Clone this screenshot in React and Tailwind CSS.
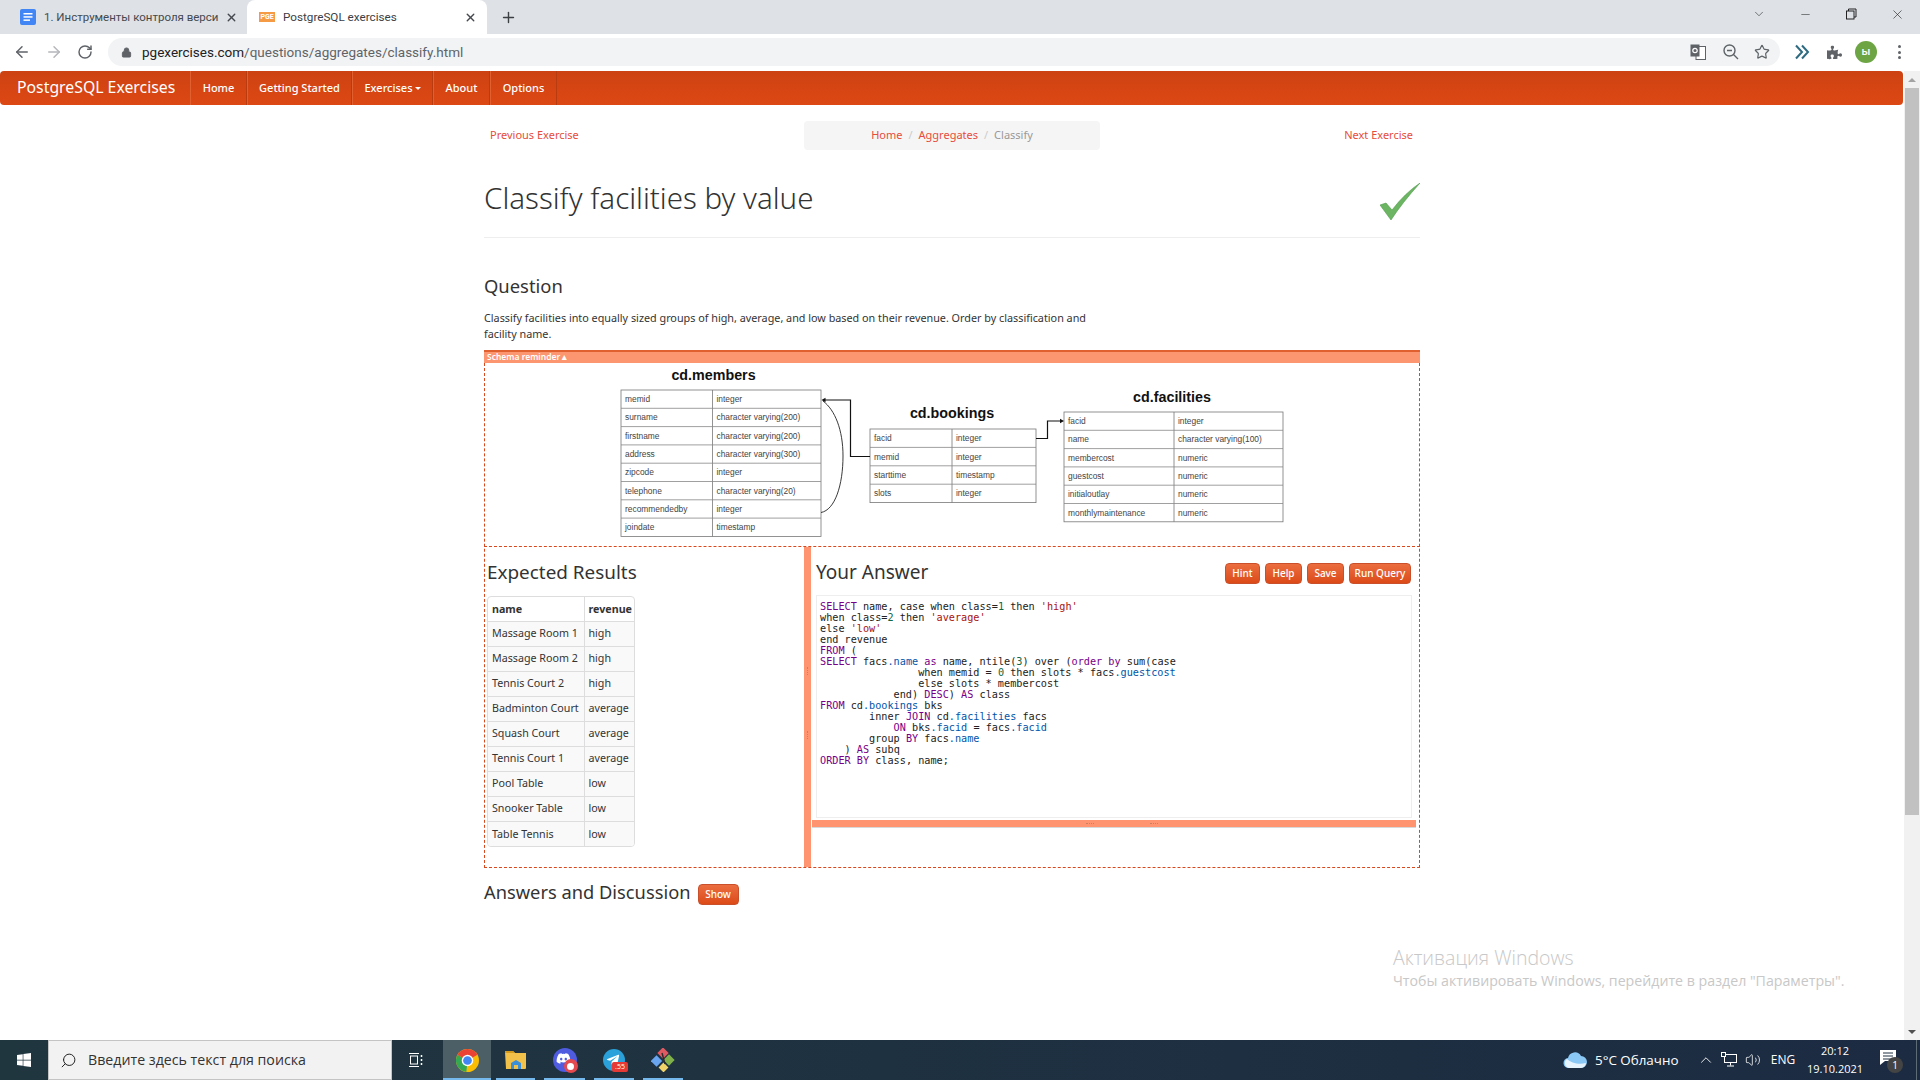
import React from 'react';
import { ArrowLeft, ArrowRight, RotateCw, Lock, Plus, X, Star, Minus, Search, Volume2, ChevronUp, ChevronDown } from 'lucide-react';
import { FaWindows, FaDiscord, FaTelegramPlane, FaPuzzlePiece } from 'react-icons/fa';

const K = 'text-[#770088]';
const S = 'text-[#aa1111]';
const P = 'text-[#0055aa]';
const N = 'text-[#116644]';

// one entry per line of the query, plain strings stay black
const CODE = [
  [['SELECT', K], ' name, case when class=', ['1', N], ' then ', ["'high'", S]],
  ['when class=', ['2', N], ' then ', ["'average'", S]],
  ['else ', ["'low'", S]],
  ['end revenue'],
  [['FROM', K], ' ('],
  [['SELECT', K], ' facs', ['.name', P], ' ', ['as', K], ' name, ntile(', ['3', N], ') over (', ['order by', K], ' sum(case'],
  ['                when memid = ', ['0', N], ' then slots * facs', ['.guestcost', P]],
  ['                else slots * membercost'],
  ['            end) ', ['DESC', K], ') ', ['AS', K], ' class'],
  [['FROM', K], ' cd', ['.bookings', P], ' bks'],
  ['        inner ', ['JOIN', K], ' cd', ['.facilities', P], ' facs'],
  ['            ', ['ON', K], ' bks', ['.facid', P], ' = facs', ['.facid', P]],
  ['        group ', ['BY', K], ' facs', ['.name', P]],
  ['    ) ', ['AS', K], ' subq'],
  [['ORDER BY', K], ' class, name;'],
];

const RESULTS = [
  ['Massage Room 1', 'high'],
  ['Massage Room 2', 'high'],
  ['Tennis Court 2', 'high'],
  ['Badminton Court', 'average'],
  ['Squash Court', 'average'],
  ['Tennis Court 1', 'average'],
  ['Pool Table', 'low'],
  ['Snooker Table', 'low'],
  ['Table Tennis', 'low'],
];

const MEMBERS = [
  ['memid', 'integer'],
  ['surname', 'character varying(200)'],
  ['firstname', 'character varying(200)'],
  ['address', 'character varying(300)'],
  ['zipcode', 'integer'],
  ['telephone', 'character varying(20)'],
  ['recommendedby', 'integer'],
  ['joindate', 'timestamp'],
];
const BOOKINGS = [
  ['facid', 'integer'],
  ['memid', 'integer'],
  ['starttime', 'timestamp'],
  ['slots', 'integer'],
];
const FACILITIES = [
  ['facid', 'integer'],
  ['name', 'character varying(100)'],
  ['membercost', 'numeric'],
  ['guestcost', 'numeric'],
  ['initialoutlay', 'numeric'],
  ['monthlymaintenance', 'numeric'],
];

function SchemaTable({ x, y, w, split, rowH, rows, title, titleX, titleY }) {
  const h = rowH * rows.length;
  return (
    <g>
      <text x={titleX} y={titleY} textAnchor="middle" fontSize="14.3" fontWeight="700" fill="#111">{title}</text>
      <rect x={x} y={y} width={w} height={h} fill="#fff" stroke="#777" strokeWidth="0.8" />
      <line x1={x + split} x2={x + split} y1={y} y2={y + h} stroke="#777" strokeWidth="0.8" />
      {rows.map(([a, b], i) => (
        <g key={a}>
          {i > 0 && <line x1={x} x2={x + w} y1={y + i * rowH} y2={y + i * rowH} stroke="#888" strokeWidth="0.8" />}
          <text x={x + 4} y={y + i * rowH + 12.1} fontSize="8.4" fill="#444">{a}</text>
          <text x={x + split + 4} y={y + i * rowH + 12.1} fontSize="8.4" fill="#444">{b}</text>
        </g>
      ))}
    </g>
  );
}

function SchemaDiagram() {
  return (
    <svg viewBox="484 363 936 184" className="block w-full h-[184px] font-['Liberation_Sans',sans-serif]">
      <SchemaTable x={621} y={390} w={200} split={91.5} rowH={18.3} rows={MEMBERS} title="cd.members" titleX={713.5} titleY={380} />
      <SchemaTable x={870} y={429} w={166} split={82} rowH={18.4} rows={BOOKINGS} title="cd.bookings" titleX={952} titleY={418} />
      <SchemaTable x={1064} y={412} w={219} split={110} rowH={18.3} rows={FACILITIES} title="cd.facilities" titleX={1172} titleY={402} />
      <path d="M870 456.5H850.5V400H824" fill="none" stroke="#111" strokeWidth="1.2" />
      <path d="M821.5 400l4-2.2v4.4z" fill="#111" />
      <path d="M1036 438.5H1047.5V421H1060" fill="none" stroke="#111" strokeWidth="1.2" />
      <path d="M1064 421l-4-2.2v4.4z" fill="#111" />
      <path d="M821 512.5C835 510 843 485 843 456C843 430 835 410 823 401" fill="none" stroke="#222" strokeWidth="0.9" />
    </svg>
  );
}

function Btn({ className, children }) {
  return (
    <button className={`h-[21px] rounded-[4px] border border-[#c9502a] bg-linear-to-b from-[#eb6d3f] to-[#dc4a16] text-[10px] font-medium text-white ${className}`}>
      {children}
    </button>
  );
}

function NavItem({ w, children }) {
  return (
    <div className={`h-full flex items-center justify-center border-r border-r-[#b93c10] border-l border-l-[#e0602f] text-[11px] font-medium text-white ${w}`}>
      {children}
    </div>
  );
}

function ChromeLogo() {
  return (
    <svg width="23" height="23" viewBox="4 4 40 40">
      <circle cx="24" cy="24" r="20" fill="#fbbc04" />
      <path d="M24 24L6.68 14A20 20 0 0 0 22 44Z" fill="#34a853" />
      <path d="M24 24L6.68 14A20 20 0 0 1 41.32 14Z" fill="#ea4335" />
      <circle cx="24" cy="24" r="10" fill="#fff" />
      <circle cx="24" cy="24" r="7.6" fill="#4285f4" />
    </svg>
  );
}

function TaskIcon({ w, active, children }) {
  return (
    <div className={`h-full pt-[2px] flex items-center justify-center border-b-[2px] border-b-[#76b9ed] ${active ? 'bg-[#4c5f67]' : ''} ${w}`}>
      {children}
    </div>
  );
}

export default function App() {
  return (
    <div className="w-[1920px] h-[1080px] flex flex-col overflow-hidden bg-white font-['Noto_Sans',sans-serif] text-[#333]">
      {/* tab strip */}
      <div className="h-[34px] shrink-0 bg-[#dee1e6] flex font-['Roboto',sans-serif] text-[12px] text-[#45494e]">
        <div className="w-[247px] flex items-center pl-[20px]">
          <svg width="16" height="16" viewBox="0 0 16 16" className="shrink-0">
            <rect width="16" height="16" y="0" rx="2" fill="#4285f4" />
            <rect x="3.5" y="4" width="9" height="1.5" fill="#fff" />
            <rect x="3.5" y="7.2" width="9" height="1.5" fill="#fff" />
            <rect x="3.5" y="10.4" width="6.5" height="1.5" fill="#fff" />
          </svg>
          <span className="ml-[8px] pt-px w-[181px] whitespace-nowrap text-[11.5px]">1. Инструменты контроля верси</span>
          <X size={13} strokeWidth={2.5} className="text-[#45494e]" />
        </div>
        <div className="w-[240px] h-full bg-white rounded-t-[8px] flex items-center pl-[12px] text-[#3c4043]">
          <div className="w-[16px] h-[10px] bg-[#f59a45] text-white text-[7px] leading-[10px] text-center font-bold">PGE</div>
          <span className="ml-[8px] pt-px w-[181px] text-[11.7px]">PostgreSQL exercises</span>
          <X size={13} strokeWidth={2.5} className="text-[#45494e]" />
        </div>
        <div className="w-[42px] flex items-center justify-center">
          <Plus size={17} strokeWidth={2} className="text-[#3c4043]" />
        </div>
        <div className="flex-1" />
        <div className="flex items-center pb-[6px] text-[#222]">
          <div className="w-[46px] flex justify-center"><ChevronDown size={14} strokeWidth={1} /></div>
          <div className="w-[46px] flex justify-center"><Minus size={13} strokeWidth={1} /></div>
          <div className="w-[46px] flex justify-center">
            <svg width="12" height="12" viewBox="0 0 12 12" fill="none" stroke="#222" strokeWidth="1">
              <rect x="1.5" y="3" width="7.5" height="8" />
              <path d="M3.5 3V1H11V9H9" />
            </svg>
          </div>
          <div className="w-[46px] flex justify-center"><X size={15} strokeWidth={1} /></div>
        </div>
      </div>

      {/* toolbar */}
      <div className="h-[36px] shrink-0 flex items-center bg-white">
        <div className="w-[108px] flex items-center pl-[13px] gap-[14px]">
          <ArrowLeft size={18} strokeWidth={2} className="text-[#5f6368]" />
          <ArrowRight size={18} strokeWidth={2} className="text-[#b5b7ba]" />
          <RotateCw size={16} strokeWidth={2.2} className="text-[#5f6368]" />
        </div>
        <div className="w-[1672px] h-[28px] rounded-full bg-[#f1f3f4] flex items-center pl-[13px] font-['Roboto',sans-serif] text-[13.5px]">
          <Lock size={11} fill="#5f6368" className="text-[#5f6368]" />
          <span className="ml-[10px] text-[#202124]">pgexercises.com</span>
          <span className="text-[#5f6368]">/questions/aggregates/classify.html</span>
          <div className="flex-1" />
          <svg width="16" height="16" viewBox="0 0 16 16" className="mr-[16px]">
            <rect x="6" y="2.5" width="9.5" height="13" fill="#fff" stroke="#5f6368" />
            <rect x="0.5" y="0.5" width="9" height="12" fill="#5f6368" />
            <circle cx="5" cy="6.5" r="2.2" fill="none" stroke="#fff" strokeWidth="1.2" />
          </svg>
          <svg width="18" height="18" viewBox="0 0 18 18" fill="none" stroke="#5f6368" strokeWidth="1.4" className="mr-[14px]">
            <circle cx="7.5" cy="7.5" r="5.5" />
            <path d="M5 7.5H10M11.5 11.5L16 16" />
          </svg>
          <Star size={16} strokeWidth={1.8} className="text-[#5f6368] mr-[10px]" />
        </div>
        <div className="flex-1 flex items-center pl-[14px]">
          <svg width="16" height="16" viewBox="0 0 16 16" fill="none" stroke="#2e6b80" strokeWidth="2">
            <path d="M2 1.5L8 8L2 14.5M8 1.5L14 8L8 14.5" />
          </svg>
          <FaPuzzlePiece size={15} className="text-[#5f6368] ml-[17px]" />
          <div className="ml-[13px] w-[22px] h-[22px] rounded-full bg-[#6da544] text-white text-[11px] font-medium flex items-center justify-center font-['Roboto',sans-serif]">ы</div>
          <div className="ml-[21px] flex flex-col gap-[2.5px]">
            <div className="w-[3px] h-[3px] rounded-full bg-[#5f6368]" />
            <div className="w-[3px] h-[3px] rounded-full bg-[#5f6368]" />
            <div className="w-[3px] h-[3px] rounded-full bg-[#5f6368]" />
          </div>
        </div>
      </div>

      {/* browser viewport */}
      <div className="flex-1 flex min-h-0">
        <div className="relative flex-1 pt-px">
          <div className="h-[34px] mr-px rounded-[4px] bg-linear-to-b from-[#cd4212] to-[#dd4814] flex items-center">
            <div className="w-[190px] pl-[17px] text-[15.8px] text-white">PostgreSQL Exercises</div>
            <NavItem w="w-[57px]">Home</NavItem>
            <NavItem w="w-[105px]">Getting Started</NavItem>
            <NavItem w="w-[81px]">
              Exercises
              <span className="ml-[2px] inline-block border-x-[3px] border-x-transparent border-t-[3px] border-t-white" />
            </NavItem>
            <NavItem w="w-[57px]">About</NavItem>
            <NavItem w="w-[67px]">Options</NavItem>
          </div>

          <div className="mx-auto w-[936px]">
            <div className="mt-[16px] h-[29px] grid grid-cols-[1fr_296px_1fr] items-center text-[11px] text-[#e74c3c]">
              <div className="pl-[6px]">Previous Exercise</div>
              <div className="h-full rounded-[4px] bg-[#f5f5f5] flex items-center justify-center gap-[6px]">
                <span>Home</span>
                <span className="text-[#ccc]">/</span>
                <span>Aggregates</span>
                <span className="text-[#ccc]">/</span>
                <span className="text-[#999]">Classify</span>
              </div>
              <div className="pr-[7px] text-right">Next Exercise</div>
            </div>

            <div className="mt-[28px] h-[60px] border-b border-[#eee] flex justify-between items-start">
              <h1 className="text-[29.5px] leading-[40px] font-light text-[#333]">Classify facilities by value</h1>
              <svg width="40" height="38" viewBox="0 0 40 38" className="mt-[5px]">
                <path d="M0 22L6 20L12 27Q25 10 40 0Q22 20 11 37Z" fill="#6cb562" stroke="#4f9a4b" strokeWidth="0.6" />
              </svg>
            </div>

            <h2 className="mt-[34px] text-[18.4px] leading-[28px] font-normal">Question</h2>
            <p className="mt-[10px] w-[620px] text-[10.8px] leading-[16px]">
              Classify facilities into equally sized groups of high, average, and low based on their revenue. Order by classification and facility name.
            </p>

            <div className="mt-[8px] h-[13px] border-t-[2px] border-t-[#e0602f] bg-[#fc9670] pl-[3px] text-[8.5px] leading-[9px] font-semibold text-white">
              Schema reminder ▴
            </div>

            <div className="h-[505px] flex flex-col border-x border-b border-dashed border-[#d9481c]">
              <div className="h-[184px] border-b border-dashed border-[#d9481c] -mx-px">
                <SchemaDiagram />
              </div>
              <div className="flex-1 flex min-h-0">
                <div className="w-[319px] pl-[2px] pt-[13px]">
                  <h3 className="text-[18.9px] leading-[24px] font-normal">Expected Results</h3>
                  <div className="mt-[12px] w-[148px] rounded-[4px] border border-[#ddd] overflow-hidden">
                    <table className="w-full border-collapse text-[10.7px] text-[#333]">
                      <thead>
                        <tr className="h-[24px] font-bold">
                          <td className="w-[96px] pl-[4px] border-r border-[#ddd]">name</td>
                          <td className="pl-[4px]">revenue</td>
                        </tr>
                      </thead>
                      <tbody>
                        {RESULTS.map(([name, revenue]) => (
                          <tr key={name} className="h-[25px] bg-[#f9f9f9] border-t border-[#ddd]">
                            <td className="pl-[4px] border-r border-[#ddd] whitespace-nowrap">{name}</td>
                            <td className="pl-[4px]">{revenue}</td>
                          </tr>
                        ))}
                      </tbody>
                    </table>
                  </div>
                </div>

                <div className="relative w-[7px] bg-[#ff9470]">
                  <div className="absolute left-[3px] top-[120px] h-[8px] w-px border-l border-dotted border-[#c9805f]" />
                  <div className="absolute left-[3px] top-[184px] h-[8px] w-px border-l border-dotted border-[#c9805f]" />
                </div>

                <div className="flex-1 flex flex-col pl-px pr-[3px]">
                  <div className="mt-[16px] h-[21px] ml-[4px] mr-[5px] flex items-center gap-[5px]">
                    <h3 className="-mt-[3px] text-[19px] leading-[24px] font-normal">Your Answer</h3>
                    <div className="flex-1" />
                    <Btn className="w-[35px]">Hint</Btn>
                    <Btn className="w-[37px]">Help</Btn>
                    <Btn className="w-[37px]">Save</Btn>
                    <Btn className="w-[62px]">Run Query</Btn>
                  </div>
                  <div className="mt-[11px] ml-[4px] mr-[4px] h-[223px] border border-[#eee] pl-[3px] pt-[5px] font-['DejaVu_Sans_Mono',monospace] text-[10.2px] leading-[11px] text-[#222] whitespace-pre">
                    {CODE.map((line, i) => (
                      <div key={i} className="h-[11px]">
                        {line.map((tok, j) =>
                          typeof tok === 'string' ? <span key={j}>{tok}</span> : <span key={j} className={tok[1]}>{tok[0]}</span>
                        )}
                      </div>
                    ))}
                  </div>
                  <div className="relative mt-[2px] h-[8px] bg-[#ff9470] border-b border-b-[#d8d8d8]">
                    <div className="absolute top-[3px] left-[274px] w-[8px] border-t border-dotted border-[#c9805f]" />
                    <div className="absolute top-[3px] left-[338px] w-[8px] border-t border-dotted border-[#c9805f]" />
                  </div>
                </div>
              </div>
            </div>

            <div className="mt-[10px] flex items-center gap-[7px]">
              <h2 className="text-[18.3px] leading-[28px] font-normal">Answers and Discussion</h2>
              <Btn className="w-[41px] mt-[5px]">Show</Btn>
            </div>
          </div>

          {/* windows watermark over the page */}
          <div className="absolute left-[1393px] top-[875px] font-['Open_Sans',sans-serif] text-[#c8c8c8] pointer-events-none">
            <div className="text-[19.5px] leading-[26px] font-light">Активация Windows</div>
            <div className="text-[14.2px] leading-[20px]">Чтобы активировать Windows, перейдите в раздел "Параметры".</div>
          </div>
        </div>

        {/* scrollbar */}
        <div className="w-[16px] shrink-0 mt-px bg-[#f1f1f1] flex flex-col items-center">
          <div className="h-[17px] flex items-center justify-center">
            <span className="border-x-[4px] border-x-transparent border-b-[4px] border-b-[#a3a3a3]" />
          </div>
          <div className="w-[14px] h-[727px] bg-[#c1c1c1]" />
          <div className="flex-1" />
          <div className="h-[17px] flex items-center justify-center">
            <span className="border-x-[4px] border-x-transparent border-t-[4px] border-t-[#505050]" />
          </div>
        </div>
      </div>

      {/* taskbar */}
      <div className="h-[40px] shrink-0 flex items-center bg-linear-to-r from-[#20363f] to-[#1c2b42] text-white font-['Open_Sans',sans-serif]">
        <div className="w-[48px] h-full flex items-center justify-center">
          <FaWindows size={16} />
        </div>
        <div className="w-[344px] h-full bg-[#f2f2f2] border border-[#c4c4c4] flex items-center pl-[11px] text-[14.2px] text-[#333]">
          <Search size={17} strokeWidth={1.4} className="-scale-x-100 text-[#222]" />
          <span className="ml-[11px]">Введите здесь текст для поиска</span>
        </div>
        <div className="w-[51px] h-full flex items-center justify-center">
          <svg width="16" height="16" viewBox="0 0 16 16" fill="none" stroke="#fff" strokeWidth="1" className="-ml-[3px]">
            <path d="M1 1.5H11M1 14.5H11" />
            <rect x="2.5" y="4" width="7" height="8" />
            <path d="M13.5 3v2M13.5 7v2M13.5 11v2" strokeWidth="1.5" />
          </svg>
        </div>
        <TaskIcon w="w-[48px]" active><ChromeLogo /></TaskIcon>
        <div className="w-[5px]" />
        <TaskIcon w="w-[39px]">
          <svg width="22" height="20" viewBox="0 0 22 20">
            <path d="M0 2a1 1 0 0 1 1-1h7l2 2h11v15a1 1 0 0 1-1 1H1z" fill="#f2c14a" />
            <path d="M0 1h8l2 2H0z" fill="#d49a1e" />
            <path d="M6 19v-6l5-3 5 3v6h-3v-4H9v4z" fill="#3b8fd9" />
          </svg>
        </TaskIcon>
        <div className="w-[9px]" />
        <TaskIcon w="w-[41px]">
          <div className="relative w-[24px] h-[24px] rounded-full bg-[#4f5ce0] flex items-center justify-center">
            <FaDiscord size={15} className="text-white -mt-[3px] -ml-[3px]" />
            <div className="absolute -right-[1px] -bottom-[1px] w-[14px] h-[14px] rounded-full bg-[#e5484d] flex items-center justify-center">
              <div className="w-[7px] h-[7px] rounded-full bg-white" />
            </div>
          </div>
        </TaskIcon>
        <div className="w-[9px]" />
        <TaskIcon w="w-[40px]">
          <div className="relative w-[22px] h-[22px] rounded-full bg-[#2aa1da] flex items-center justify-center">
            <FaTelegramPlane size={14} className="text-white -ml-[2px]" />
            <div className="absolute left-[9px] top-[13px] w-[16px] h-[10px] rounded-[2px] bg-[#e53935] text-[7px] leading-[10px] text-center text-white">.55</div>
          </div>
        </TaskIcon>
        <div className="w-[9px]" />
        <TaskIcon w="w-[40px]">
          <svg width="24" height="24" viewBox="0 0 24 24">
            <rect x="1.5" y="9" width="8" height="8" transform="rotate(45 5.5 13)" fill="#6aa5f0" />
            <rect x="9" y="16" width="7" height="7" transform="rotate(45 12.5 19.5)" fill="#f0d469" />
            <rect x="14" y="8" width="8" height="8" transform="rotate(45 18 12)" fill="#7fb04a" />
            <rect x="8" y="1" width="8" height="8" transform="rotate(45 12 5)" fill="#e05a62" />
            <path d="M11 5L14 16" stroke="#2b2b2b" strokeWidth="1.4" />
          </svg>
        </TaskIcon>
        <div className="flex-1" />

        {/* tray */}
        <svg width="24" height="18" viewBox="0 0 24 18" className="mr-[8px]">
          <path d="M6 17a5 5 0 0 1-1-10A7 7 0 0 1 18 5a6 6 0 0 1 0 12z" fill="#8cc8f5" />
          <path d="M6 17a5 5 0 0 1-2-9c4 4 12 6 19 4a6 6 0 0 1-5 5z" fill="#e8f4fd" />
        </svg>
        <span className="text-[13.4px] w-[87px] whitespace-nowrap">5°C Облачно</span>
        <ChevronUp size={18} strokeWidth={1.2} className="ml-[15px]" />
        <svg width="16" height="16" viewBox="0 0 16 16" fill="none" stroke="#fff" strokeWidth="1" className="ml-[6px]">
          <rect x="3.5" y="2.5" width="12" height="8" />
          <rect x="0.5" y="0.5" width="4" height="4" fill="#1f3040" />
          <path d="M9.5 10.5v3M6 14h7" />
        </svg>
        <Volume2 size={16} strokeWidth={1.2} className="ml-[8px]" />
        <span className="ml-[9px] w-[26px] text-center text-[12px]">ENG</span>
        <div className="ml-[9px] w-[60px] text-center text-[11px] leading-[18px]">
          <div>20:12</div>
          <div>19.10.2021</div>
        </div>
        <div className="relative ml-[15px] w-[20px] h-[20px]">
          <svg width="16" height="15" viewBox="0 0 16 15">
            <path d="M0 0H16V11H5L0 15Z" fill="#fff" />
            <path d="M3 3H13M3 6H13M3 9H13" stroke="#1f3040" strokeWidth="1" />
          </svg>
          <div className="absolute left-[7px] top-[7px] w-[16px] h-[16px] rounded-full bg-[#444] text-[10px] leading-[16px] text-center">1</div>
        </div>
        <div className="ml-[16px] w-px h-full bg-[#5d6b75]" />
        <div className="w-[3px]" />
      </div>
    </div>
  );
}
